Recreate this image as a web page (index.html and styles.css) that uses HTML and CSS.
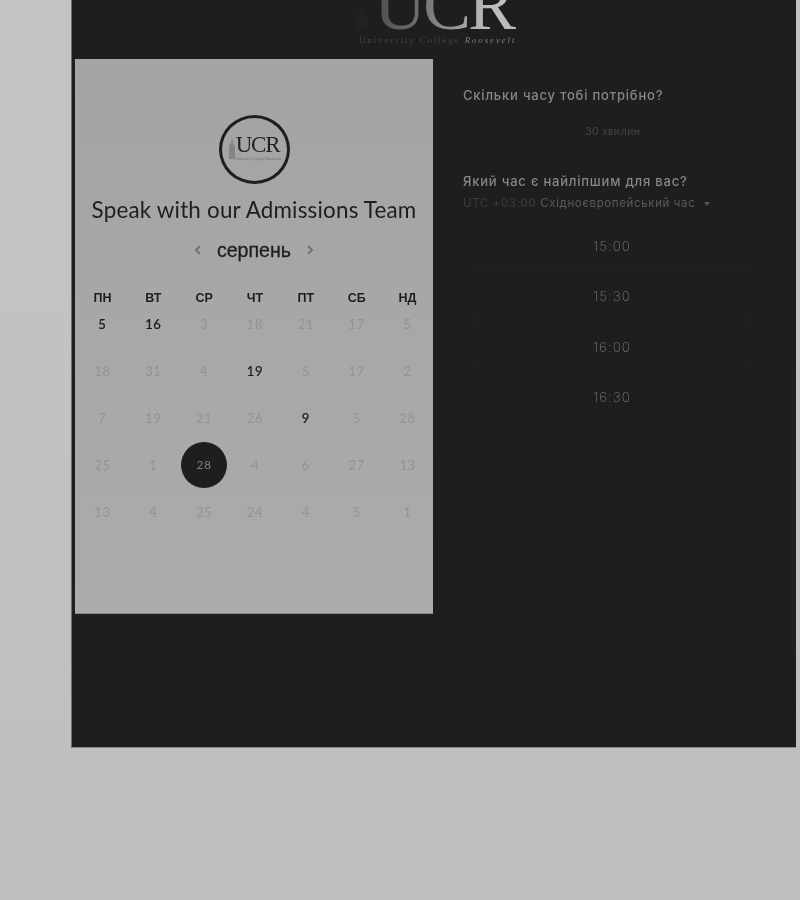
FILE: index.html
```html
<!DOCTYPE html>
<html lang="uk">
<head>
  <meta charset="UTF-8" />
  <meta name="viewport" content="width=device-width, initial-scale=1.0"/>
  <title>Speak with our Admissions Team</title>
  <link rel="stylesheet" href="styles.css">
</head>
<body>
  <div class="panel">
    <header class="brand">
      <svg class="brand-tower" viewBox="0 0 16 30" width="16" height="30">
        <path d="M8 0 L10 12 L14 16 L14 30 L2 30 L2 16 L6 12 Z" fill="#212121"/>
      </svg>
      <div class="brand-mark">UCR</div>
      <div class="brand-sub">University College <span class="brand-name">Roosevelt</span></div>
    </header>

    <div class="columns">
      <section class="calendar">
        <div class="badge">
          <svg class="badge-tower" viewBox="0 0 8 22" width="8" height="22">
            <path d="M4 0 L5 6 L7 9 L7 22 L1 22 L1 9 L3 6 Z" fill="#858585"/>
          </svg>
          <span class="badge-mark">UCR</span>
          <span class="badge-sub">University College Roosevelt</span>
        </div>
        <h1>Speak with our Admissions Team</h1>

        <div class="month">
          <svg class="chev" viewBox="0 0 8 12" width="8" height="12"><path d="M6 2 L2 6 L6 10" fill="none" stroke="#707070" stroke-width="1.8"/></svg>
          <span class="month-name">серпень</span>
          <svg class="chev" viewBox="0 0 8 12" width="8" height="12"><path d="M2 2 L6 6 L2 10" fill="none" stroke="#707070" stroke-width="1.8"/></svg>
        </div>

        <div class="weekdays">
          <span>ПН</span><span>ВТ</span><span>СР</span><span>ЧТ</span><span>ПТ</span><span>СБ</span><span>НД</span>
        </div>

        <div class="days">
          <span class="day on">5</span><span class="day on">16</span><span class="day">3</span><span class="day">18</span><span class="day">21</span><span class="day">17</span><span class="day">5</span>
          <span class="day">18</span><span class="day">31</span><span class="day">4</span><span class="day on">19</span><span class="day">5</span><span class="day">17</span><span class="day">2</span>
          <span class="day">7</span><span class="day">19</span><span class="day">21</span><span class="day">26</span><span class="day on">9</span><span class="day">5</span><span class="day">28</span>
          <span class="day">25</span><span class="day">1</span><span class="day picked"><b>28</b></span><span class="day">4</span><span class="day">6</span><span class="day">27</span><span class="day">13</span>
          <span class="day">13</span><span class="day">4</span><span class="day">25</span><span class="day">24</span><span class="day">4</span><span class="day">5</span><span class="day">1</span>
        </div>
      </section>

      <section class="booking">
        <h2>Скільки часу тобі потрібно?</h2>
        <div class="duration">30 хвилин</div>

        <h2>Який час є найліпшим для вас?</h2>
        <div class="zone">
          <span class="zone-offset">UTC +03:00</span> Східноєвропейський час
          <svg class="zone-caret" viewBox="0 0 6 4" width="6" height="4"><path d="M0 0 L6 0 L3 4 Z" fill="#555"/></svg>
        </div>

        <ul class="slots">
          <li>15:00</li>
          <li>15:30</li>
          <li>16:00</li>
          <li>16:30</li>
        </ul>
      </section>
    </div>
  </div>
</body>
</html>
```

FILE: styles.css
```css
html, body {
  height: 100%;
}

body {
  margin: 0;
  height: 900px;
  overflow: hidden;
  background: linear-gradient(#c4c4c4, #bfbfbf);
  font-family: "Lato", sans-serif;
}

.panel {
  box-sizing: border-box;
  margin-left: 71px;
  width: 725px;
  height: 748px;
  background: #1e1e1e;
  border-left: 1px solid #6e6e6e;
  border-bottom: 1px solid #8a8a8a;
  overflow: hidden;
  filter: grayscale(1) blur(0.35px);
}

/* top logo, cut off by the panel edge */
.brand {
  position: relative;
  height: 59px;
  padding-left: 287px;
  box-sizing: border-box;
  overflow: hidden;
}

.brand-tower {
  position: absolute;
  left: 281px;
  top: 0;
}

.brand-mark {
  margin-top: -21px;
  height: 52px;
  line-height: 52px;
  font-family: "Liberation Serif", serif;
  font-size: 72px;
  letter-spacing: -3px;
  background: linear-gradient(90deg, #3e3e3e 0, #6a6a6a 60px, #bdbdbd 135px);
  -webkit-background-clip: text;
  background-clip: text;
  color: transparent;
  width: 150px;
  padding-left: 20px;
  margin-left: -5px;
}

.brand-sub {
  margin-top: 4px;
  height: 11px;
  line-height: 11px;
  font-family: "Liberation Serif", serif;
  font-size: 9px;
  letter-spacing: 1.85px;
  color: #444;
  white-space: nowrap;
}

.brand-name {
  font-style: italic;
  color: #7e7e7e;
}

.columns {
  display: flex;
  padding-left: 3px;
}

.calendar {
  box-sizing: border-box;
  width: 358px;
  height: 555px;
  padding: 56px 2px 0;
  background: linear-gradient(#a4a4a4, #ababab);
  border-bottom: 1px solid #8a8a8a;
}

.badge {
  position: relative;
  box-sizing: border-box;
  width: 71px;
  height: 69px;
  margin: 0 auto;
  border: 3px solid #1e1e1e;
  border-radius: 50%;
  display: flex;
  flex-direction: column;
  align-items: center;
  padding-top: 17px;
}

.badge-tower {
  position: absolute;
  left: 6px;
  top: 19px;
}

.badge-mark {
  font-family: "Liberation Serif", serif;
  font-size: 23px;
  line-height: 20px;
  letter-spacing: -1.2px;
  color: #222;
  padding-left: 7px;
}

.badge-sub {
  margin-top: 1px;
  font-family: "Liberation Serif", serif;
  font-size: 4px;
  line-height: 5px;
  color: #707070;
  padding-left: 7px;
  white-space: nowrap;
}

h1 {
  margin: 12px 0 0;
  font-size: 22.4px;
  line-height: 28px;
  font-weight: 400;
  letter-spacing: 0.2px;
  text-align: center;
  color: #1e1e1e;
  white-space: nowrap;
}

.month {
  display: flex;
  justify-content: center;
  align-items: center;
  gap: 15px;
  height: 28px;
  margin-top: 12px;
}

.month-name {
  font-family: "Liberation Sans", sans-serif;
  font-size: 19.6px;
  -webkit-text-stroke: 0.3px #1e1e1e;
  color: #1e1e1e;
}

.weekdays {
  display: grid;
  grid-template-columns: repeat(7, 1fr);
  margin: 24px -2px 0 0;
  height: 20px;
  line-height: 20px;
  text-align: center;
  font-family: "Liberation Sans", sans-serif;
  font-size: 12.5px;
  font-weight: 700;
  color: #1e1e1e;
}

.days {
  display: grid;
  grid-template-columns: repeat(7, 1fr);
  grid-auto-rows: 46.8px;
  margin: -7px -2px 0 0;
  text-align: center;
  font-size: 13px;
  letter-spacing: 0.6px;
  color: #939393;
}

.day {
  display: flex;
  align-items: center;
  justify-content: center;
}

.day.on {
  color: #1a1a1a;
  -webkit-text-stroke: 0.2px #1a1a1a;
}

.day.picked b {
  display: flex;
  align-items: center;
  justify-content: center;
  width: 46px;
  height: 46px;
  border-radius: 50%;
  background: #1e1e1e;
  color: #7f7f7f;
  font-size: 12px;
  font-weight: 400;
}

.booking {
  box-sizing: border-box;
  width: 330px;
  padding: 27px 0 0 30px;
}

h2 {
  margin: 0;
  font-family: "Inter", sans-serif;
  font-size: 13px;
  line-height: 18px;
  font-weight: 500;
  letter-spacing: 0.8px;
  color: #868686;
  white-space: nowrap;
}

.duration {
  width: 300px;
  margin: 18px 0 32px;
  height: 18px;
  line-height: 18px;
  font-size: 10.5px;
  letter-spacing: 0.6px;
  text-align: center;
  color: #454545;
}

.zone {
  margin-top: 4px;
  height: 18px;
  line-height: 18px;
  font-family: "Inter", sans-serif;
  font-size: 11.5px;
  letter-spacing: 0.63px;
  color: #5a5a5a;
  white-space: nowrap;
}

.zone-offset {
  color: #3c3c3c;
}

.zone-caret {
  margin-left: 5px;
  vertical-align: 1px;
}

.slots {
  list-style: none;
  margin: 9px 0 0;
  padding: 0;
  width: 296px;
}

.slots li {
  box-sizing: border-box;
  height: 46px;
  margin: 0 0 4.4px 10px;
  width: 278px;
  line-height: 48px;
  border: 1px solid #202020;
  text-align: center;
  font-family: "Inter", sans-serif;
  font-size: 13.5px;
  font-weight: 200;
  letter-spacing: 1px;
  color: #777;
}
```
